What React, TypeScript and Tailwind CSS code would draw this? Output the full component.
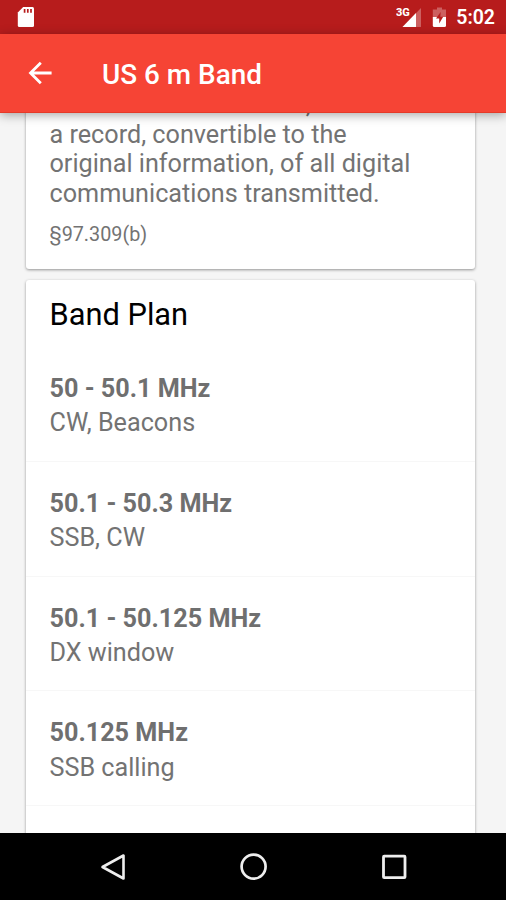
//types
type BandSegment = { range: string; usage: string };

//data
//----------------------------------------------------------------------

const segments: BandSegment[] = [
  { range: '50 - 50.1 MHz', usage: 'CW, Beacons' },
  { range: '50.1 - 50.3 MHz', usage: 'SSB, CW' },
  { range: '50.1 - 50.125 MHz', usage: 'DX window' },
  { range: '50.125 MHz', usage: 'SSB calling' },
];

//----------------------------------------------------------------------

function StatusBar() {
  return (
    <div className="flex h-[34px] shrink-0 items-center bg-[#b71c1c] pl-[17px] pr-[11px] text-white">
      <svg width="18" height="22" viewBox="0 0 18 22" aria-hidden="true">
        <path
          d="M6.2 1H15.5Q17 1 17 2.5V19.5Q17 21 15.5 21H2.3Q.8 21 .8 19.5V6.4Z"
          fill="#fff"
        />
        <path d="M7.6 3V6.8M10.8 3V6.8M14 3V6.8" stroke="#b71c1c" strokeWidth="1.7" />
      </svg>
      <div className="ml-auto flex items-center pt-[2px]">
        <svg width="26" height="22" viewBox="0 0 26 22" aria-hidden="true">
          <path d="M25 1V20H6.5Z" fill="#fff" fillOpacity=".3" />
          <path d="M20 6V20H6.5Z" fill="#fff" />
          <text
            x="0"
            y="9"
            fill="#fff"
            fontSize="11"
            fontWeight="800"
            stroke="#b71c1c"
            strokeWidth="1"
            paintOrder="stroke"
          >
            3G
          </text>
        </svg>
        <svg
          className="ml-[10px]"
          width="15"
          height="22"
          viewBox="0 0 15 22"
          aria-hidden="true"
        >
          <path d="M5 .5H10V2.5H14V10H.8V2.5H5Z" fill="#fff" fillOpacity=".3" />
          <path d="M.8 10H14V18.5Q14 20 12.5 20H2.3Q.8 20 .8 18.5Z" fill="#fff" />
          <path d="M8.7 5L4 11.5H7.2V16.5L11.2 9.8H8.3Z" fill="#b71c1c" />
        </svg>
        <span className="ml-[9px] text-[19.5px] font-semibold leading-[34px]">5:02</span>
      </div>
    </div>
  );
}

function AppBar() {
  return (
    <header className="relative z-10 flex h-[79px] shrink-0 items-center border-b border-[#e53a28] bg-[#f64435] pl-[28px] text-white shadow-[0_2px_10px_rgba(0,0,0,0.35)]">
      <svg width="24" height="24" viewBox="0 0 24 24" fill="none" aria-hidden="true">
        <path d="M12.8 1.7L2.5 12L12.8 22.3M2.5 12H23.6" stroke="#fff" strokeWidth="2.8" />
      </svg>
      <h1 className="ml-[50px] pt-[4px] text-[27.9px] font-medium leading-8">US 6 m Band</h1>
    </header>
  );
}

function RuleCard() {
  return (
    <section className="-mt-[23px] h-[179px] shrink-0 rounded-[3px] bg-white pl-[23.5px] shadow-[0_1px_3px_rgba(0,0,0,0.4)]">
      <p className="whitespace-nowrap text-[25.2px] leading-[29.6px] text-[#737373]">
        these communications, maintain
        <br />
        a record, convertible to the
        <br />
        original information, of all digital
        <br />
        communications transmitted.
      </p>
      <p className="mt-[15px] text-[19.8px] leading-6 text-[#737373]">§97.309(b)</p>
    </section>
  );
}

function BandPlanCard() {
  return (
    <section className="mt-[11px] h-[600px] shrink-0 rounded-[3px] bg-white shadow-[0_1px_3px_rgba(0,0,0,0.4)]">
      <h2 className="h-[67px] pl-[23.5px] pt-[17px] text-[30.8px] leading-9 text-black">
        Band Plan
      </h2>
      <ul>
        {segments.map(({ range, usage }) => (
          <li
            key={range}
            className="h-[114.8px] border-b border-[#f7f7f7] pl-[23.5px] pt-[25px] text-[25.2px] leading-[34.3px] text-[#737373]"
          >
            <div className="font-bold text-[#6f6f6f]">{range}</div>
            <div>{usage}</div>
          </li>
        ))}
      </ul>
    </section>
  );
}

function NavigationBar() {
  return (
    <nav className="flex h-[67px] shrink-0 items-center justify-between bg-black pl-[99px] pr-[98px]">
      <svg width="28" height="28" viewBox="0 0 28 28" fill="none" aria-hidden="true">
        <path d="M24.5 2.5V25.5L3.5 14Z" stroke="#eee" strokeWidth="2.6" strokeLinejoin="round" />
      </svg>
      <svg width="28" height="28" viewBox="0 0 28 28" fill="none" aria-hidden="true">
        <circle cx="13.6" cy="13.6" r="12" stroke="#eee" strokeWidth="2.7" />
      </svg>
      <svg width="28" height="28" viewBox="0 0 28 28" fill="none" aria-hidden="true">
        <rect x="3.5" y="3.2" width="21.5" height="21.5" rx=".7" stroke="#eee" strokeWidth="2.8" />
      </svg>
    </nav>
  );
}

//----------------------------------------------------------------------

export default function App() {
  return (
    <div className="flex h-[900px] w-[506px] flex-col overflow-hidden bg-[#f5f5f5] font-['Roboto',sans-serif]">
      <StatusBar />
      <AppBar />
      <main className="flex min-h-0 flex-1 flex-col overflow-hidden pl-[26px] pr-[31px]">
        <RuleCard />
        <BandPlanCard />
      </main>
      <NavigationBar />
    </div>
  );
}
